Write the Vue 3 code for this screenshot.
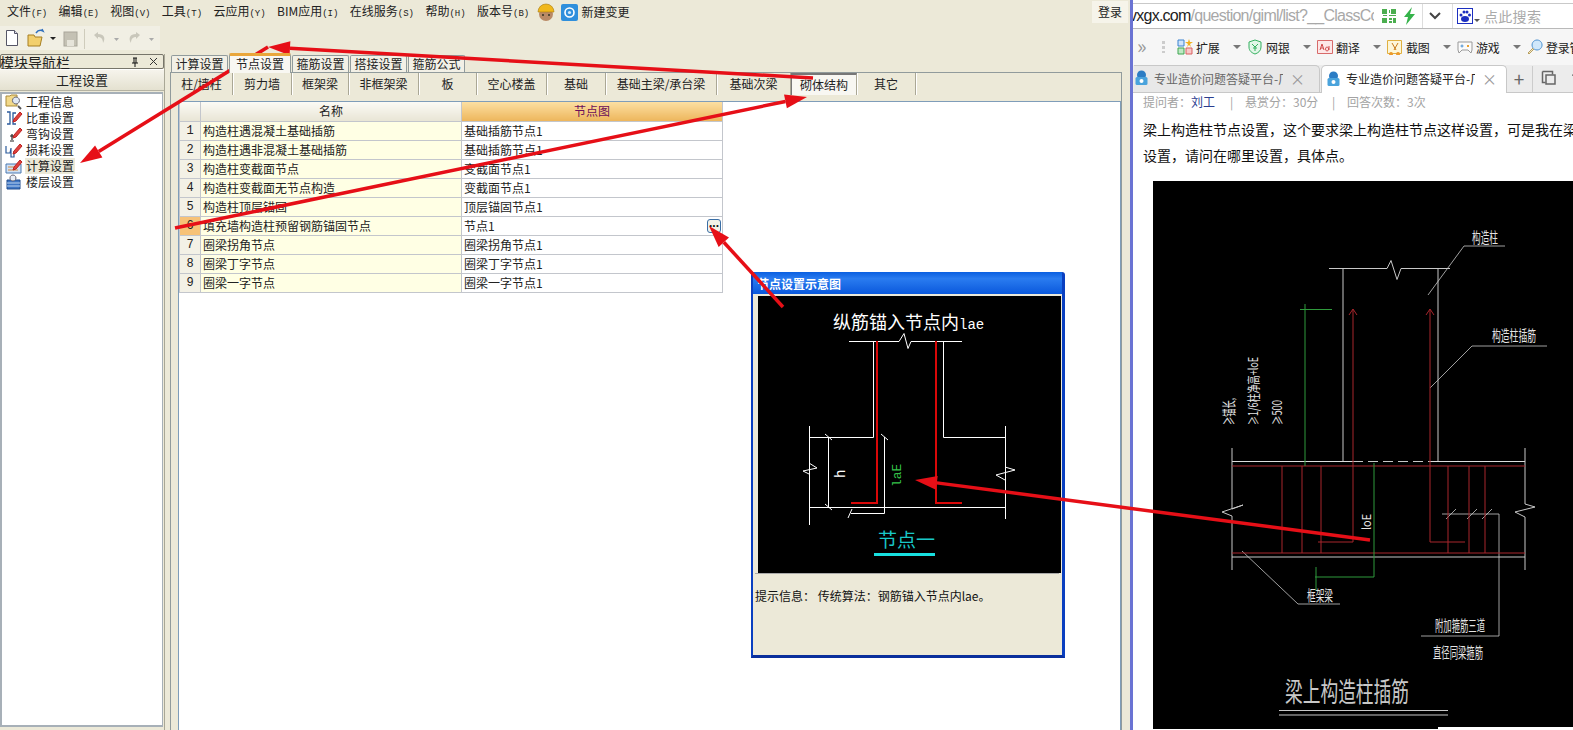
<template>
  <div class="app">
    <!-- left: GCG desktop program -->
    <div class="ide">
      <div class="menubar">
        <span v-for="m in menus" :key="m.label" class="menu-item">{{ m.label }}<small>({{ m.key }})</small></span>
        <svg class="menu-ico" width="20" height="20" viewBox="0 0 20 20">
          <circle cx="10" cy="12" r="7" fill="#b98a66" />
          <path d="M2 10a8 8 0 0 1 16 0z" fill="#f0b81c" stroke="#a87a10" stroke-width=".6" />
          <circle cx="7" cy="13" r="1" fill="#332" /><circle cx="13" cy="13" r="1" fill="#332" />
        </svg>
        <svg class="menu-ico blue" width="17" height="17" viewBox="0 0 17 17">
          <rect width="17" height="17" rx="2" fill="#2f8fdc" />
          <circle cx="8.5" cy="8.5" r="4.5" fill="none" stroke="#fff" stroke-width="1.6" />
          <circle cx="8.5" cy="8.5" r="1.6" fill="#cfe8fb" />
        </svg>
        <span class="menu-new">新建变更</span>
        <span class="login">登录</span>
      </div>

      <div class="toolbar">
        <svg width="160" height="24" viewBox="0 0 160 24">
          <path d="M6.5 4.5h8l3 3v12h-11z" fill="#fff" stroke="#556" />
          <path d="M14.5 4.5v3h3" fill="#dde" stroke="#556" />
          <path d="M28 9h6l1 2h7l-2 9H28z" fill="#f2cf6e" stroke="#a67f22" />
          <path d="M36 7c2-3 5-3 7-2l-1-2" fill="none" stroke="#2e6fbe" stroke-width="1.5" />
          <path d="M50 11h6l-3 3z" fill="#222" />
          <rect x="64" y="6" width="13" height="14" fill="#c4c1b4" stroke="#a9a69a" />
          <rect x="67" y="14" width="7" height="6" fill="#e6e4da" />
          <rect x="84" y="3" width="1" height="20" fill="#cfccbc" />
          <path d="M94 9l4-3v2c6 0 8 4 5 9 0-4-2-6-5-6v2z" fill="#c9c7bb" />
          <path d="M114 12h5l-2.500 3z" fill="#aaa" />
          <path d="M140 9l-4-3v2c-6 0-8 4-5 9 0-4 2-6 5-6v2z" fill="#c9c7bb" />
          <path d="M149 12h5l-2.500 3z" fill="#aaa" />
        </svg>
      </div>

      <div class="workspace">
        <aside class="nav">
          <div class="nav-title">
            <span class="nav-name">模块导航栏</span>
            <svg width="10" height="10" viewBox="0 0 10 10"><path d="M3 1h4M4 1v5M6 1v5M2 6h6M5 6v4" stroke="#111" fill="none" /></svg>
            <svg class="nav-close" width="9" height="9" viewBox="0 0 9 9"><path d="M1 1l7 7M8 1L1 8" stroke="#333" fill="none" /></svg>
          </div>
          <div class="nav-group">工程设置</div>
          <ul class="nav-list">
            <li v-for="n in navItems" :key="n.label" class="nav-row">
              <svg width="18" height="16" viewBox="0 0 18 16">
                <path v-for="(p, i) in n.icon" :key="i" :d="p.d" :fill="p.fill || 'none'" :stroke="p.stroke || 'none'" :stroke-width="p.w || 1" />
              </svg>
              <span :class="{ selected: n.selected }">{{ n.label }}</span>
            </li>
          </ul>
        </aside>

        <main class="main">
          <div class="tabs">
            <span v-for="t in tabs" :key="t" class="tab" :class="{ on: t === '节点设置' }">{{ t }}</span>
          </div>
          <div class="panel">
            <div class="subtabs">
              <span v-for="s in subtabs" :key="s" class="subtab" :class="{ on: s === '砌体结构' }">{{ s }}</span>
            </div>
            <div class="pane">
              <table class="grid">
                <colgroup><col class="c0" /><col class="c1" /><col class="c2" /></colgroup>
                <thead>
                  <tr><th></th><th>名称</th><th class="hot">节点图</th></tr>
                </thead>
                <tbody>
                  <tr v-for="(r, i) in rows" :key="i">
                    <td class="no" :class="{ cur: i === 5 }">{{ i + 1 }}</td>
                    <td class="name">{{ r[0] }}</td>
                    <td class="val">{{ r[1] }}<button v-if="i === 5" class="more">...</button></td>
                  </tr>
                </tbody>
              </table>
            </div>
          </div>
        </main>
      </div>
    </div>

    <div class="divider"></div>

    <!-- right: browser window -->
    <div class="browser">
      <div class="url-row">
        <span class="url"><b>vxgx.com</b>/question/giml/list?__ClassCc</span>
        <svg class="qr" width="14" height="14" viewBox="0 0 14 14">
          <path d="M0 0h5v5H0zM9 0h5v5H9zM0 9h5v5H0zM7 1h1v3H7zM7 6h7v1H7zM1 6h4v1H1zM7 9h3v2H7zM11 9h3v5h-3zM7 12h3v2H7z" fill="#4bae4f" />
        </svg>
        <svg class="bolt" width="13" height="18" viewBox="0 0 13 18"><path d="M9 0L1 10h4l-2 8 9-11H7z" fill="#35b34a" /></svg>
        <span class="url-sep"></span>
        <svg class="chev" width="12" height="8" viewBox="0 0 12 8"><path d="M1 1l5 5 5-5" fill="none" stroke="#444" stroke-width="2" /></svg>
        <span class="url-sep"></span>
        <svg class="paw" width="16" height="16" viewBox="0 0 16 16">
          <rect width="16" height="16" fill="#fff" stroke="#1c2fc0" stroke-width="2" />
          <ellipse cx="8" cy="11" rx="4" ry="3" fill="#1c2fc0" />
          <circle cx="4" cy="7" r="1.500" fill="#1c2fc0" /><circle cx="7" cy="4" r="1.500" fill="#1c2fc0" />
          <circle cx="10" cy="4" r="1.500" fill="#1c2fc0" /><circle cx="12.500" cy="7" r="1.500" fill="#1c2fc0" />
        </svg>
        <i class="paw-caret"></i>
        <span class="search">点此搜索</span>
      </div>

      <div class="tool-row">
        <span class="chevrons">»</span>
        <span class="dots"></span>
        <span v-for="b in tools" :key="b.label" class="tool">
          <svg width="16" height="16" viewBox="0 0 16 16">
            <path v-for="(p, i) in b.icon" :key="i" :d="p.d" :fill="p.fill || 'none'" :stroke="p.stroke || 'none'" />
          </svg>
          <span class="tool-label">{{ b.label }}</span>
          <i v-if="b.caret" class="caret"></i>
        </span>
      </div>

      <div class="tab-row">
        <div v-for="(t, i) in [0, 1]" :key="t" class="btab" :class="{ on: i === 1 }">
          <svg width="15" height="16" viewBox="0 0 15 16">
            <circle cx="7.500" cy="5" r="4.500" fill="#2b7cc4" />
            <rect x="1.500" y="7" width="12" height="8" rx="1.500" fill="#4aa3dc" />
            <circle cx="7.500" cy="11" r="2" fill="#fff" />
          </svg>
          <span class="btab-text">专业造价问题答疑平台-厂</span>
          <span class="btab-x">×</span>
        </div>
        <span class="plus">+</span>
        <span class="tab-sep"></span>
        <svg class="copy-ico" width="16" height="16" viewBox="0 0 16 16">
          <path d="M1.500 1.500h10v3M1.500 1.500v11h3" fill="none" stroke="#666" stroke-width="1.500" />
          <rect x="5" y="5" width="9" height="9" fill="none" stroke="#666" stroke-width="1.500" />
        </svg>
        <svg class="undo-ico" width="12" height="16" viewBox="0 0 12 16"><path d="M5 1l-4 4h3v7h8" fill="none" stroke="#666" stroke-width="1.500" /></svg>
      </div>

      <div class="question">
        <div class="meta">
          <span class="m1">提问者：<em>刘工</em></span><span class="m2">|</span>
          <span class="m3">悬赏分：30分</span><span class="m4">|</span>
          <span>回答次数：3次</span>
        </div>
        <p>梁上构造柱节点设置，这个要求梁上构造柱节点这样设置，可是我在梁<br />设置，请问在哪里设置，具体点。</p>
      </div>

      <svg class="cad" width="420" height="548" viewBox="1153 182 420 548">
        <rect x="1153" y="182" width="420" height="548" fill="#000" />
        <g fill="none" stroke="#c8c8c8">
          <path d="M1329 269.500h58l4-8 6 19 4-11h49M1343 269.500V462.500M1438 269.500V462.500" />
          <path d="M1232 462.500h121M1430 462.500h95" stroke="#ddd" />
          <path d="M1353 462.500h77" stroke-dasharray="10 5" />
          <path d="M1232 449V510l11-4-21 7 10 4V571M1525 449V505l10 3-20 5 10 5V571M1232 558h293" />
          <path d="M1428 296l36-49h41M1430 389l42-42h75M1242 552l56 53h42M1442 515h57V637h-78M1446 520l10-10M1467 520l10-10M1482 520l10-10" stroke-width=".8" />
          <path d="M1279 711.500h169M1279 716h169" />
        </g>
        <g fill="none" stroke="#a8262c">
          <path d="M1232 467h293M1232 554h293" />
          <path d="M1282 467v87M1302 467v87M1321 467v87M1448 467v87M1469 467v87M1485 467v87" />
          <path d="M1349 316l4-6 4 6M1353 310.500V543h-35M1426 316l4-6 4 6M1430 310.500V543h35" />
        </g>
        <g fill="none" stroke="#2f9a3c">
          <path d="M1300 310.500h32M1305 305V467" />
          <path d="M1374 464V578h-59M1316 568v24" />
        </g>
        <g class="cad-txt" fill="#e4e4e4">
          <text x="1472" y="244" font-size="15" textLength="26" lengthAdjust="spacingAndGlyphs">构造柱</text>
          <text x="1492" y="342" font-size="15" textLength="44" lengthAdjust="spacingAndGlyphs">构造柱插筋</text>
          <text x="1307" y="602" font-size="15" textLength="26" lengthAdjust="spacingAndGlyphs">框架梁</text>
          <text x="1435" y="632" font-size="15" textLength="50" lengthAdjust="spacingAndGlyphs">附加箍筋三道</text>
          <text x="1433" y="659" font-size="15" textLength="50" lengthAdjust="spacingAndGlyphs">直径同梁箍筋</text>
          <text x="1285" y="703" font-size="27" textLength="124" lengthAdjust="spacingAndGlyphs" fill="#c8c8c8">梁上构造柱插筋</text>
          <text transform="translate(1234 426) rotate(-90)" font-size="14" textLength="27" lengthAdjust="spacingAndGlyphs">≥锚长,</text>
          <text transform="translate(1258 426) rotate(-90)" font-size="13" textLength="68" lengthAdjust="spacingAndGlyphs">≥1/6柱净高+loE</text>
          <text transform="translate(1282 426) rotate(-90)" font-size="13" textLength="25" lengthAdjust="spacingAndGlyphs">≥500</text>
          <text transform="translate(1371 531) rotate(-90)" font-size="12" textLength="16" lengthAdjust="spacingAndGlyphs">loE</text>
        </g>
        <rect x="1438" y="728" width="135" height="2" fill="#fff" />
      </svg>
    </div>

    <!-- floating dialog -->
    <div class="dialog">
      <div class="dialog-title">节点设置示意图</div>
      <svg class="dialog-pic" width="303" height="277" viewBox="757 296 303 277">
        <rect x="757" y="296" width="303" height="277" fill="#000" />
        <text class="pic-title" x="832" y="329" fill="#fff" font-size="18">纵筋锚入节点内<tspan class="pic-mono" font-size="14">lae</tspan></text>
        <g fill="none" stroke="#fff">
          <path d="M848 341.500h50l5-8 4 15 3-7h51" />
          <path d="M872.500 341V437.500H808.500M942.500 341V437.500H1004M808.500 426V525M1004.500 426V519M808 507.500H1004" />
          <path d="M808 463l8 5-14 3 6 3M1004 467l10 3-19 5 9 5" />
          <path d="M827.500 437V507M824 434l7 6M824 504l7 6M883.500 437V513.500H850M880 434l7 6M851 509l-4 9" />
        </g>
        <path d="M876 341V503H850M935 341V503H961" fill="none" stroke="#d80808" stroke-width="2" />
        <text transform="translate(844 478) rotate(-90)" fill="#fff" font-size="14" class="pic-mono">h</text>
        <text transform="translate(900 487) rotate(-90)" fill="#35c24a" font-size="13" class="pic-mono">laE</text>
        <text class="pic-title" x="877" y="547" fill="#19c8c8" font-size="19">节点一</text>
        <rect x="873" y="553" width="61" height="3" fill="#18e0e0" />
      </svg>
      <div class="dialog-info">提示信息： 传统算法：钢筋锚入节点内lae。</div>
    </div>

    <!-- red annotation arrows drawn on top of the screenshot -->
    <svg class="arrows" width="1573" height="730" viewBox="0 0 1573 730">
      <g v-for="(a, i) in arrows" :key="i">
        <line :x1="a.x1" :y1="a.y1" :x2="a.bx" :y2="a.by" stroke="#e60f17" stroke-width="3.5" />
        <polygon :points="a.head" fill="#e60f17" />
      </g>
    </svg>
  </div>
</template>

<script setup>
const menus = [
  { label: '文件', key: 'F' },
  { label: '编辑', key: 'E' },
  { label: '视图', key: 'V' },
  { label: '工具', key: 'T' },
  { label: '云应用', key: 'Y' },
  { label: 'BIM应用', key: 'I' },
  { label: '在线服务', key: 'S' },
  { label: '帮助', key: 'H' },
  { label: '版本号', key: 'B' },
]

const pencil = [
  { d: 'M9 9l6-7 2 2-6 7-3 1z', fill: '#e0413c', stroke: '#b22' },
]

const navItems = [
  {
    label: '工程信息',
    icon: [
      { d: 'M1 2h4l1-1h6v11H1z', fill: '#f2d98a', stroke: '#a98a3a' },
      { d: 'M11 10a3.500 3.500 0 1 0-.1 0z', fill: '#dfe8f4', stroke: '#667' },
      { d: 'M13 12l3 3', stroke: '#555', w: 2 },
    ],
  },
  {
    label: '比重设置',
    icon: [{ d: 'M2 2h3v12H2M11 3H8v11h3', stroke: '#2a5a9c', w: 1.3 }, ...pencil],
  },
  {
    label: '弯钩设置',
    icon: [{ d: 'M7 8v6M5 15h4M5 10h4', stroke: '#222', w: 1.2 }, ...pencil],
  },
  {
    label: '损耗设置',
    icon: [{ d: 'M1 4v7h4l1-5v9h3V9', stroke: '#2a5a9c', w: 1.2 }, ...pencil],
  },
  {
    label: '计算设置',
    selected: true,
    icon: [
      { d: 'M1 6h15v9H1z', fill: '#cfe0f4', stroke: '#4a78b0' },
      { d: 'M3 9h8M3 12h10', stroke: '#d88a3a' },
      ...pencil,
    ],
  },
  {
    label: '楼层设置',
    icon: [
      { d: 'M2 6h13v9H2z', fill: '#3f76c4', stroke: '#234e90' },
      { d: 'M2 9h13M2 12h13', stroke: '#bcd4f0' },
      { d: 'M8 7a3 3 0 1 0-.1 0z', fill: '#e8eef6', stroke: '#667' },
    ],
  },
]

const tabs = ['计算设置', '节点设置', '箍筋设置', '搭接设置', '箍筋公式']
const subtabs = ['柱/墙柱', '剪力墙', '框架梁', '非框架梁', '板', '空心楼盖', '基础', '基础主梁/承台梁', '基础次梁', '砌体结构', '其它']

const rows = [
  ['构造柱遇混凝土基础插筋', '基础插筋节点1'],
  ['构造柱遇非混凝土基础插筋', '基础插筋节点1'],
  ['构造柱变截面节点', '变截面节点1'],
  ['构造柱变截面无节点构造', '变截面节点1'],
  ['构造柱顶层锚固', '顶层锚固节点1'],
  ['填充墙构造柱预留钢筋锚固节点', '节点1'],
  ['圈梁拐角节点', '圈梁拐角节点1'],
  ['圈梁丁字节点', '圈梁丁字节点1'],
  ['圈梁一字节点', '圈梁一字节点1'],
]

const tools = [
  {
    label: '扩展',
    caret: true,
    icon: [
      { d: 'M1 1h6v6H1z', fill: '#cfe4fb', stroke: '#3a82d0' },
      { d: 'M1 9h6v6H1z', fill: '#bfe8c4', stroke: '#3fa650' },
      { d: 'M9 9h6v6H9z', fill: '#f8c8c8', stroke: '#d86060' },
      { d: 'M12 0l1 3h3l-3 2 1 3-2-2-2 2 1-3-3-2h3z', fill: '#f2b01e' },
    ],
  },
  {
    label: '网银',
    caret: true,
    icon: [
      { d: 'M8 1l6 2v5c0 4-3 6-6 7-3-1-6-3-6-7V3z', fill: '#e2f6e8', stroke: '#35b060' },
      { d: 'M5 5l3 3 3-3M8 8v4M6 9h4', stroke: '#35b060' },
    ],
  },
  {
    label: '翻译',
    caret: true,
    icon: [
      { d: 'M.5 1.500h15v13H.5z', fill: '#fde8e8', stroke: '#d86a6a' },
      { d: 'M3 11l2-6 2 6M4 9h2M10 8a1.500 2 0 1 0 .1 0M12 7v4', stroke: '#d04a4a' },
    ],
  },
  {
    label: '截图',
    caret: true,
    icon: [
      { d: 'M.5 1.500h14v13H.5z', fill: '#fdf6d8', stroke: '#e0b040' },
      { d: 'M5 4l4 7M11 4l-4 7', stroke: '#c87a18' },
      { d: 'M4 13a2 2 0 1 0 .1 0M11 13a2 2 0 1 0 .1 0', fill: '#eb9a2a' },
    ],
  },
  {
    label: '游戏',
    caret: true,
    icon: [
      { d: 'M1 3h14v8l-1 3-3-3H5l-3 3-1-3z', fill: '#fbfbfb', stroke: '#999' },
      { d: 'M3.500 7h3M5 5.500v3', stroke: '#4a90d0' },
      { d: 'M10 6h2v2h-2z', fill: '#e8a030' },
    ],
  },
  {
    label: '登录管',
    caret: false,
    icon: [
      { d: 'M10 1a5 5 0 1 0 .1 0z', fill: '#d0e8fb', stroke: '#4a90d0' },
      { d: 'M6 9l-5 5 1 1 5-5', fill: '#f4e8c8', stroke: '#b8a060' },
    ],
  },
]

// arrows as drawn on the picture: start point, then tip
function arrow(x1, y1, x2, y2) {
  const len = Math.hypot(x2 - x1, y2 - y1)
  const ux = (x2 - x1) / len
  const uy = (y2 - y1) / len
  const bx = x2 - ux * 22
  const by = y2 - uy * 22
  const head = [
    [x2, y2],
    [bx - uy * 7, by + ux * 7],
    [bx + uy * 7, by - ux * 7],
  ]
  return { x1, y1, bx, by, head: head.map((p) => p.join(',')).join(' ') }
}

const arrows = [
  arrow(813, 78, 268, 47),
  arrow(268, 47, 80, 163),
  arrow(175, 228, 807, 97),
  arrow(783, 307, 709, 226),
  arrow(1370, 540, 915, 480),
]
</script>

<style>
body {
  margin: 0;
  background: #ece9d8;
}
</style>

<style scoped>
.app {
  position: relative;
  display: flex;
  width: 1573px;
  height: 730px;
  overflow: hidden;
  font-family: "Noto Sans CJK SC", "Liberation Sans", sans-serif;
  font-size: 12px;
  color: #222;
}

/* ---------- desktop program ---------- */
.ide {
  width: 1130px;
  flex: none;
  display: flex;
  flex-direction: column;
  background: #ece9d8;
}
.menubar {
  height: 24px;
  display: flex;
  align-items: center;
  gap: 11.4px;
  padding-left: 7px;
  line-height: 1;
}
.menu-item {
  white-space: nowrap;
}
.menu-item small {
  font-family: "Liberation Mono", monospace;
  font-size: 9px;
}
.menu-ico {
  flex: none;
  margin-left: -5px;
}
.menu-ico.blue {
  margin-left: -6px;
}
.menu-new {
  margin-left: -8px;
  white-space: nowrap;
}
.login {
  margin-left: auto;
  margin-right: 2px;
  padding: 5px 6px;
  background: #f6f4ea;
}
.toolbar {
  height: 30px;
  flex: none;
}
.toolbar svg {
  display: block;
  margin-top: 2px;
  background: #f1efe4;
}
.workspace {
  flex: 1;
  display: flex;
  min-height: 0;
}

.nav {
  width: 165px;
  flex: none;
  display: flex;
  flex-direction: column;
  border-right: 1px solid #a9a796;
  box-sizing: border-box;
}
.nav-title {
  height: 15px;
  flex: none;
  display: flex;
  align-items: center;
  border: 1px solid #77756a;
  border-radius: 2px;
  line-height: 1;
  font-size: 14px;
  box-sizing: border-box;
}
.nav-name {
  flex: 1;
  margin-left: -1px;
}
.nav-close {
  margin: 0 5px 0 9px;
}
.nav-group {
  height: 22px;
  flex: none;
  line-height: 20px;
  text-align: center;
  font-size: 13px;
  box-sizing: border-box;
  background: linear-gradient(#f6f4ec, #e4e1d0);
  border-bottom: 1px solid #b5b3a3;
  border-top: 1px solid #fff;
}
.nav-list {
  list-style: none;
  margin: 1px 1px 3px 0;
  padding: 0;
  flex: 1;
  background: #fff;
  border: 2px solid #a7b0b8;
  border-right-width: 1px;
}
.nav-row {
  height: 16px;
  display: flex;
  align-items: center;
  padding-left: 3px;
  gap: 3px;
  line-height: 16px;
}
.selected {
  background: #ece9d8;
  padding: 0 1px;
  margin-left: -1px;
}

.main {
  flex: 1;
  min-width: 0;
  padding-left: 5px;
  padding-right: 8px;
  display: flex;
  flex-direction: column;
}
.tabs {
  height: 18px;
  flex: none;
  display: flex;
  align-items: flex-end;
  padding-left: 1px;
  gap: 1px;
}
.tab {
  width: 57px;
  height: 17px;
  line-height: 15px;
  text-align: center;
  border: 1px solid #919b9c;
  border-bottom: none;
  border-radius: 2px 2px 0 0;
  background: #f2f0e6;
  box-sizing: border-box;
}
.tab.on {
  width: 62px;
  height: 20px;
  margin-bottom: -1px;
  background: #f8f7f2;
  border-top: 3px solid #e9a63a;
  position: relative;
  z-index: 1;
}
.panel {
  flex: 1;
  display: flex;
  flex-direction: column;
  border: 1px solid #919b9c;
  border-bottom: none;
  min-height: 0;
}
.subtabs {
  height: 28px;
  flex: none;
  display: grid;
  grid-template-columns: 62px 59px 57px 70px 58px 70px 59px 111px 74px 66px 59px;
  align-items: center;
  padding-bottom: 6px;
  box-sizing: border-box;
}
.subtab {
  height: 22px;
  line-height: 21px;
  text-align: center;
  border-right: 1px solid #aaa795;
  box-shadow: 1px 0 0 #fff;
  white-space: nowrap;
}
.subtab.on {
  background: #f8f7f2;
  border-top: 2px solid #777;
  border-left: 1px solid #777;
  line-height: 19px;
  box-sizing: border-box;
}
.pane {
  flex: 1;
  margin-left: 7px;
  background: #fff;
  border: 1px solid #7f9db9;
  border-bottom: none;
}
.grid {
  border-collapse: collapse;
  table-layout: fixed;
  width: 543px;
}
.c0 { width: 21px; }
.c1 { width: 261px; }
.c2 { width: 261px; }
.grid th {
  height: 19px;
  padding: 0;
  font-weight: 400;
  line-height: 16px;
  background: linear-gradient(#fbfaf5, #e8e5d5);
  border: 1px solid #c3c6cc;
  border-top: none;
  box-sizing: border-box;
}
.grid th.hot {
  background: linear-gradient(#fcdfa2, #edb65c);
  color: #6b0f5a;
}
.grid td {
  height: 19px;
  padding: 0 0 0 2px;
  line-height: 16px;
  border: 1px solid #c3c6cc;
  box-sizing: border-box;
  white-space: nowrap;
}
.grid td.no {
  padding: 0;
  text-align: center;
  font-family: "Liberation Mono", monospace;
  background: #f3f1e6;
}
.grid td.no.cur {
  background: #f7c277;
}
.grid td.name {
  background: #ffffe4;
}
.grid td.val {
  position: relative;
}
.more {
  position: absolute;
  right: 1px;
  top: 2px;
  width: 14px;
  height: 14px;
  padding: 0 0 6px;
  font-size: 12px;
  font-weight: 700;
  line-height: 6px;
  font-family: "Liberation Sans", sans-serif;
  border: 1px solid #3a6ea5;
  border-radius: 3px;
  background: #f2f1e8;
  color: #111;
}

.divider {
  width: 3px;
  flex: none;
  background: #6a73d3;
}

/* ---------- browser ---------- */
.browser {
  flex: 1;
  min-width: 0;
  background: #fff;
  overflow: hidden;
  display: flex;
  flex-direction: column;
}
.url-row {
  margin-top: 3px;
  height: 26px;
  flex: none;
  display: flex;
  align-items: center;
  border-top: 1px solid #c9c9c9;
  border-bottom: 1px solid #b9b9b9;
  box-sizing: border-box;
  overflow: hidden;
}
.url {
  width: 245px;
  flex: none;
  margin-left: -4px;
  font-family: "Liberation Sans", sans-serif;
  font-size: 16px;
  letter-spacing: -0.75px;
  color: #a8a8a8;
  white-space: nowrap;
  overflow: hidden;
}
.url b {
  font-weight: 400;
  color: #222;
}
.qr {
  margin-left: 8px;
  flex: none;
}
.bolt {
  margin-left: 7px;
  flex: none;
}
.url-sep {
  width: 1px;
  height: 26px;
  flex: none;
  background: #ddd;
  margin-left: 6px;
}
.chev {
  margin-left: 6px;
  margin-right: 5px;
  flex: none;
}
.paw {
  margin-left: 4px;
  flex: none;
}
.paw-caret {
  margin: 8px 0 0 1px;
  border: 3px solid transparent;
  border-top: 3px solid #555;
  border-bottom: none;
}
.search {
  margin-left: 4px;
  font-size: 14px;
  letter-spacing: 0.3px;
  color: #aaa;
  flex: none;
}
.tool-row {
  height: 36px;
  flex: none;
  display: flex;
  align-items: center;
  background: #f6f6f6;
  padding-left: 4px;
  white-space: nowrap;
  overflow: hidden;
}
.chevrons {
  width: 25px;
  flex: none;
  font-size: 20px;
  color: #999;
  line-height: 1;
  margin-bottom: 3px;
}
.dots {
  width: 3px;
  height: 12px;
  flex: none;
  background: repeating-linear-gradient(#ccc 0 3px, transparent 3px 5px);
  margin-right: 12px;
}
.tool {
  width: 70px;
  flex: none;
  display: flex;
  align-items: center;
  gap: 3px;
  font-size: 12px;
}
.tool-label {
  letter-spacing: -0.2px;
}
.caret {
  margin-left: 10px;
  border: 4px solid transparent;
  border-top: 4px solid #777;
  border-bottom: none;
}
.tab-row {
  height: 28px;
  flex: none;
  display: flex;
  align-items: flex-end;
  background: #ececec;
  border-bottom: 1px solid #c8c8c8;
  box-sizing: border-box;
  padding-left: 1px;
  gap: 1px;
}
.btab {
  width: 186px;
  height: 27px;
  flex: none;
  display: flex;
  align-items: center;
  padding-bottom: 2px;
  gap: 5px;
  box-sizing: border-box;
  color: #666;
  background: #e8e8e8;
  border: 1px solid #c8c8c8;
  border-left: none;
  border-bottom: none;
  border-radius: 0 5px 0 0;
}
.btab.on {
  height: 28px;
  margin-bottom: -1px;
  background: #fff;
  color: #222;
  padding-left: 4px;
  border-left: 1px solid #c8c8c8;
  border-radius: 5px 5px 0 0;
}
.btab-text {
  width: 129px;
  flex: none;
  overflow: hidden;
  white-space: nowrap;
}
.btab-x {
  font-size: 15px;
  color: #999;
  line-height: 1;
  margin-left: 2px;
}
.plus {
  width: 22px;
  flex: none;
  text-align: center;
  font-size: 19px;
  color: #666;
  line-height: 26px;
}
.tab-sep {
  width: 1px;
  height: 26px;
  flex: none;
  background: #ccc;
  margin-left: 1px;
}
.copy-ico {
  margin: 0 0 6px 7px;
  flex: none;
}
.undo-ico {
  margin: 0 0 6px 14px;
  flex: none;
}
.question {
  padding-left: 10px;
  flex: none;
  height: 88px;
}
.meta {
  height: 17px;
  line-height: 17px;
  display: flex;
  color: #a3a3a3;
  white-space: nowrap;
}
.meta em {
  font-style: normal;
  color: #2a3d8f;
}
.m1 { width: 87px; }
.m2 { width: 15px; }
.m3 { width: 87px; }
.m4 { width: 15px; }
.question p {
  margin: 6px 0 0;
  font-size: 14px;
  line-height: 26px;
  color: #111;
  white-space: nowrap;
}
.cad {
  display: block;
  flex: none;
  margin-left: 20px;
}
.cad-txt text,
.pic-title {
  font-family: "Noto Sans CJK SC", sans-serif;
}
.pic-mono {
  font-family: "Liberation Mono", monospace;
}

/* ---------- dialog ---------- */
.dialog {
  position: absolute;
  left: 751px;
  top: 272px;
  width: 314px;
  height: 386px;
  box-sizing: border-box;
  padding: 0 3px 3px;
  background: #ece9d8;
  border-radius: 3px 3px 0 0;
  border-left: 2px solid #0a3fc0;
  border-right: 3px solid #0a3fc0;
  border-bottom: 3px solid #0a2f9c;
}
.dialog-title {
  height: 22px;
  margin: 0 -3px;
  padding-left: 4px;
  line-height: 23px;
  font-weight: 700;
  color: #fff;
  background: linear-gradient(#0a5fe0, #2a7cf0 30%, #0a58dc);
}
.dialog-pic {
  display: block;
  margin: 2px 0 0 2px;
}
.dialog-info {
  border-top: 1px solid #a9a9a9;
  padding: 14px 0 0;
  margin-left: -1px;
  line-height: 16px;
  color: #111;
  white-space: nowrap;
}
.arrows {
  position: absolute;
  left: 0;
  top: 0;
  pointer-events: none;
}
</style>
